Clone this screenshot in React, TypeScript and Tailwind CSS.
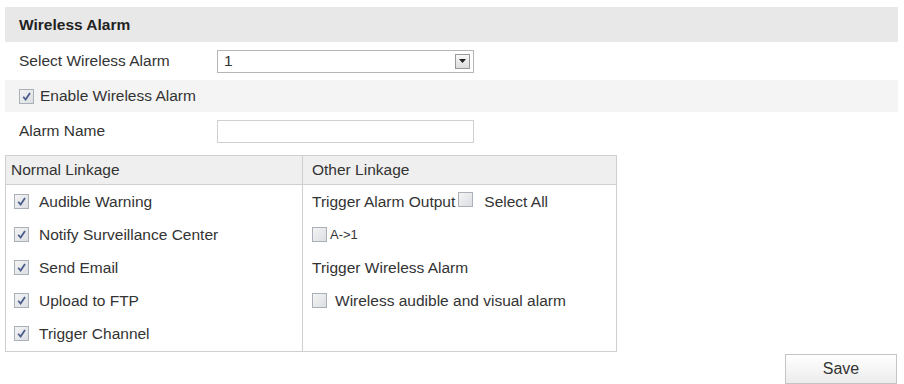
import React from "react";

function Check({ checked }: { checked?: boolean }) {
  return (
    <span className="inline-flex h-[15px] w-[15px] shrink-0 items-center justify-center border border-[#a9b0b8] bg-gradient-to-br from-[#f4f4f4] to-[#dcdee2]">
      {checked && (
        <svg width="11" height="11" viewBox="0 0 10 10">
          <path d="M2 5.2 L4.2 7.8 L8.2 1.8" fill="none" stroke="#4a5c8c" strokeWidth="1.6" />
        </svg>
      )}
    </span>
  );
}

const normal = ["Audible Warning", "Notify Surveillance Center", "Send Email", "Upload to FTP", "Trigger Channel"];

export default function App() {
  return (
    <div className="h-[384px] w-[904px] bg-white px-[5px] pt-[7px] text-[15.5px] text-[#333] [font-family:'Liberation_Sans',Arial,sans-serif]">
      <div className="flex h-[35px] w-[893px] items-center bg-[#e8e8e8] pl-[14px] font-bold text-[#222]">
        Wireless Alarm
      </div>

      <div className="flex h-[38px] items-center pl-[14px]">
        <span className="w-[198px]">Select Wireless Alarm</span>
        <div className="flex h-[23px] w-[257px] items-center justify-between border border-[#b5b5b5] bg-white pl-[6px] pr-[3px]">
          <span>1</span>
          <span className="flex h-[15px] w-[15px] items-center justify-center border border-[#999] bg-gradient-to-b from-[#f8f8f8] to-[#dcdcdc]">
            <svg width="7" height="4" viewBox="0 0 7 4">
              <path d="M0 0 H7 L3.5 4 Z" fill="#222" />
            </svg>
          </span>
        </div>
      </div>

      <div className="flex h-[32px] w-[893px] items-center gap-[6px] bg-[#f4f4f4] pl-[14px]">
        <Check checked />
        <span>Enable Wireless Alarm</span>
      </div>

      <div className="flex h-[38px] items-center pl-[14px]">
        <span className="w-[198px]">Alarm Name</span>
        <div className="h-[23px] w-[257px] border border-[#d0d0d0] bg-white" />
      </div>

      <div className="mt-[5px] flex w-[612px] border border-[#cfcfcf]">
        <div className="w-[297px] border-r border-[#cfcfcf]">
          <div className="flex h-[29px] items-center border-b border-[#cfcfcf] bg-[#efefef] pl-[5px]">Normal Linkage</div>
          <div className="pb-[1px]">
            {normal.map((t) => (
              <div key={t} className="flex h-[33px] items-center gap-[10px] pl-[8px]">
                <Check checked />
                <span>{t}</span>
              </div>
            ))}
          </div>
        </div>
        <div className="flex-1">
          <div className="flex h-[29px] items-center border-b border-[#cfcfcf] bg-[#efefef] pl-[9px]">Other Linkage</div>
          <div className="flex h-[33px] items-center pl-[9px]">
            <span>Trigger Alarm Output</span>
            <span className="ml-[3px]"><Check /></span>
            <span className="ml-[11px]">Select All</span>
          </div>
          <div className="flex h-[33px] items-center gap-[3px] pl-[9px] text-[13px]">
            <Check />
            <span>A-&gt;1</span>
          </div>
          <div className="flex h-[33px] items-center pl-[9px]">Trigger Wireless Alarm</div>
          <div className="flex h-[33px] items-center gap-[8px] pl-[9px]">
            <Check />
            <span>Wireless audible and visual alarm</span>
          </div>
        </div>
      </div>

      <div className="flex w-[893px] justify-end pr-[1px] pt-[2px]">
        <button className="h-[30px] w-[112px] border border-[#c4c4c4] bg-gradient-to-b from-white to-[#ececec] text-[16px] text-[#333]">
          Save
        </button>
      </div>
    </div>
  );
}
